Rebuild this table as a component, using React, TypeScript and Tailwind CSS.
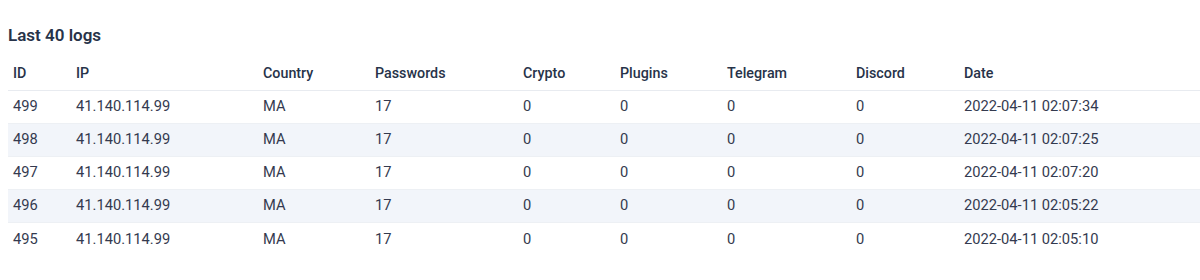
const columns = [
  { label: 'ID', w: 'w-[63px]' },
  { label: 'IP', w: 'w-[187px]' },
  { label: 'Country', w: 'w-[112px]' },
  { label: 'Passwords', w: 'w-[148px]' },
  { label: 'Crypto', w: 'w-[97px]' },
  { label: 'Plugins', w: 'w-[107px]' },
  { label: 'Telegram', w: 'w-[129px]' },
  { label: 'Discord', w: 'w-[108px]' },
  { label: 'Date', w: 'w-[241px]' },
];

const logs = [
  { id: 499, date: '2022-04-11 02:07:34' },
  { id: 498, date: '2022-04-11 02:07:25' },
  { id: 497, date: '2022-04-11 02:07:20' },
  { id: 496, date: '2022-04-11 02:05:22' },
  { id: 495, date: '2022-04-11 02:05:10' },
];

export default function App() {
  return (
    <div className="w-[1200px] h-[280px] bg-white pl-2 pt-[25px] font-['Roboto',sans-serif] text-[#343a4f]">
      <h2 className="text-[17px] leading-[20px] font-semibold text-[#273349]">Last 40 logs</h2>
      <table className="mt-[13px] w-[1192px] table-fixed border-collapse text-[14.7px]">
        <thead>
          <tr className="h-[32px] border-b border-[#e8ebf0]">
            {columns.map((c) => (
              <th key={c.label} className={`${c.w} px-[5px] text-left font-medium text-[14.3px] text-[#273349]`}>
                {c.label}
              </th>
            ))}
          </tr>
        </thead>
        <tbody>
          {logs.map((l, i) => (
            <tr
              key={l.id}
              className={`h-[33px] border-b border-[#edf0f4] ${i % 2 === 1 ? 'bg-[#f2f5fa]' : 'bg-white'} last:border-b-0`}
            >
              <td className="px-[5px]">{l.id}</td>
              <td className="px-[5px]">41.140.114.99</td>
              <td className="px-[5px]">MA</td>
              <td className="px-[5px]">17</td>
              <td className="px-[5px]">0</td>
              <td className="px-[5px]">0</td>
              <td className="px-[5px]">0</td>
              <td className="px-[5px]">0</td>
              <td className="px-[5px]">{l.date}</td>
            </tr>
          ))}
        </tbody>
      </table>
    </div>
  );
}
